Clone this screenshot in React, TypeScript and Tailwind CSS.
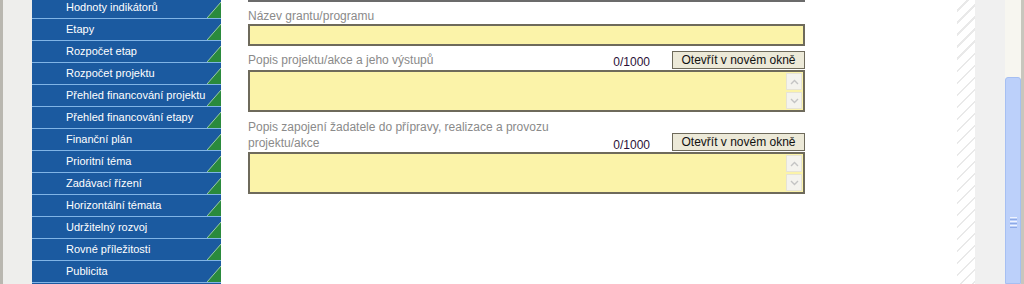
import React from 'react';

const menu = [
  'Hodnoty indikátorů',
  'Etapy',
  'Rozpočet etap',
  'Rozpočet projektu',
  'Přehled financování projektu',
  'Přehled financování etapy',
  'Finanční plán',
  'Prioritní téma',
  'Zadávací řízení',
  'Horizontální témata',
  'Udržitelný rozvoj',
  'Rovné příležitosti',
  'Publicita',
  '',
];

function Corner() {
  return (
    <svg width="14" height="16" viewBox="0 0 14 16" className="absolute right-0 bottom-0">
      <polygon points="0,16 14,16 14,0" fill="#2a8a3c" />
      <line x1="0" y1="16" x2="14" y2="0" stroke="#9cc9a8" strokeWidth="1" />
    </svg>
  );
}

function MenuItem({ label }: { label: string }) {
  return (
    <div className="relative flex h-[22px] items-center border-b border-[#80b4e6] pl-[34px] text-[11px] text-white">
      {label}
      <Corner />
    </div>
  );
}

function Chevron({ up }: { up?: boolean }) {
  return (
    <svg width="9" height="6" viewBox="0 0 9 6">
      <polyline
        points={up ? '1,5 4.5,1.5 8,5' : '1,1 4.5,4.5 8,1'}
        fill="none"
        stroke="#c4c4c4"
        strokeWidth="1.4"
      />
    </svg>
  );
}

function TextArea() {
  return (
    <div className="flex h-[42px] justify-end border-2 border-[#6e6a5b] bg-[#fbf3a9] pr-[1px]">
      <div className="flex w-[16px] flex-col justify-between py-[1px]">
        <div className="flex h-[17px] items-center justify-center border border-[#e6e3d6] bg-[#f4f3ee]">
          <Chevron up />
        </div>
        <div className="flex h-[17px] items-center justify-center border border-[#e6e3d6] bg-[#f4f3ee]">
          <Chevron />
        </div>
      </div>
    </div>
  );
}

function Counter() {
  return <div className="ml-auto mr-[22px] text-[#2b1138]">0/1000</div>;
}

function OpenButton() {
  return (
    <div className="flex h-[18px] w-[133px] items-center justify-center border border-[#6e6a5b] bg-[#ece9d8] text-[#111]">
      Otevřít v novém okně
    </div>
  );
}

export default function App() {
  return (
    <div
      className="flex h-[284px] w-[1024px] overflow-hidden bg-white"
      style={{ fontFamily: '"Liberation Sans", Arial, sans-serif' }}
    >
      <div className="flex w-[32px] shrink-0">
        <div className="w-[3px] bg-[#b9b7b0]" />
        <div className="flex-1 bg-[#eeeeec]" />
      </div>

      <div className="mt-[-3px] w-[189px] shrink-0 bg-[#1b5aa0]">
        {menu.map((m, i) => (
          <MenuItem key={i} label={m} />
        ))}
      </div>

      <div className="w-[736px] shrink-0 pl-[27px] text-[12px] leading-[14px]">
        <div className="w-[557px]">
          <div className="h-[2px] bg-[#6b6b6b]" />
          <div className="h-[22px] pt-[7px] text-[#8a8a8a]">Název grantu/programu</div>
          <div className="h-[22px] border-2 border-[#6e6a5b] bg-[#fbf3a9]" />

          <div className="flex h-[24px] items-end pb-[1px]">
            <div className="mb-[2px] text-[#8a8a8a]">Popis projektu/akce a jeho výstupů</div>
            <Counter />
            <OpenButton />
          </div>
          <TextArea />

          <div className="flex h-[40px] items-end">
            <div className="w-[340px] pb-[1px] leading-[16px] text-[#8a8a8a]">
              Popis zapojení žadatele do přípravy, realizace a provozu projektu/akce
            </div>
            <Counter />
            <div className="mb-[1px]">
              <OpenButton />
            </div>
          </div>
          <TextArea />
        </div>
      </div>

      <div className="w-[18px] shrink-0 bg-[repeating-linear-gradient(135deg,#ffffff_0px,#ffffff_7px,#e9e9e9_7px,#e9e9e9_8.5px)]" />
      <div className="w-[30px] shrink-0 bg-[#f0f0f0]" />

      <div className="flex w-[16px] shrink-0 flex-col bg-[#f7f6f0]">
        <div className="h-[77px]" />
        <div className="flex flex-1 flex-col items-center rounded-t-[3px] border border-[#a6bff2] bg-[#bcd0fa] pt-[139px]">
          <div className="flex flex-col gap-[1px]">
            <div className="h-[1px] w-[7px] bg-[#eef3fe]" />
            <div className="h-[1px] w-[7px] bg-[#8eaae6]" />
            <div className="h-[1px] w-[7px] bg-[#eef3fe]" />
            <div className="h-[1px] w-[7px] bg-[#8eaae6]" />
            <div className="h-[1px] w-[7px] bg-[#eef3fe]" />
            <div className="h-[1px] w-[7px] bg-[#8eaae6]" />
          </div>
        </div>
      </div>
      <div className="w-[3px] shrink-0 bg-[#c8c6bd]" />
    </div>
  );
}
